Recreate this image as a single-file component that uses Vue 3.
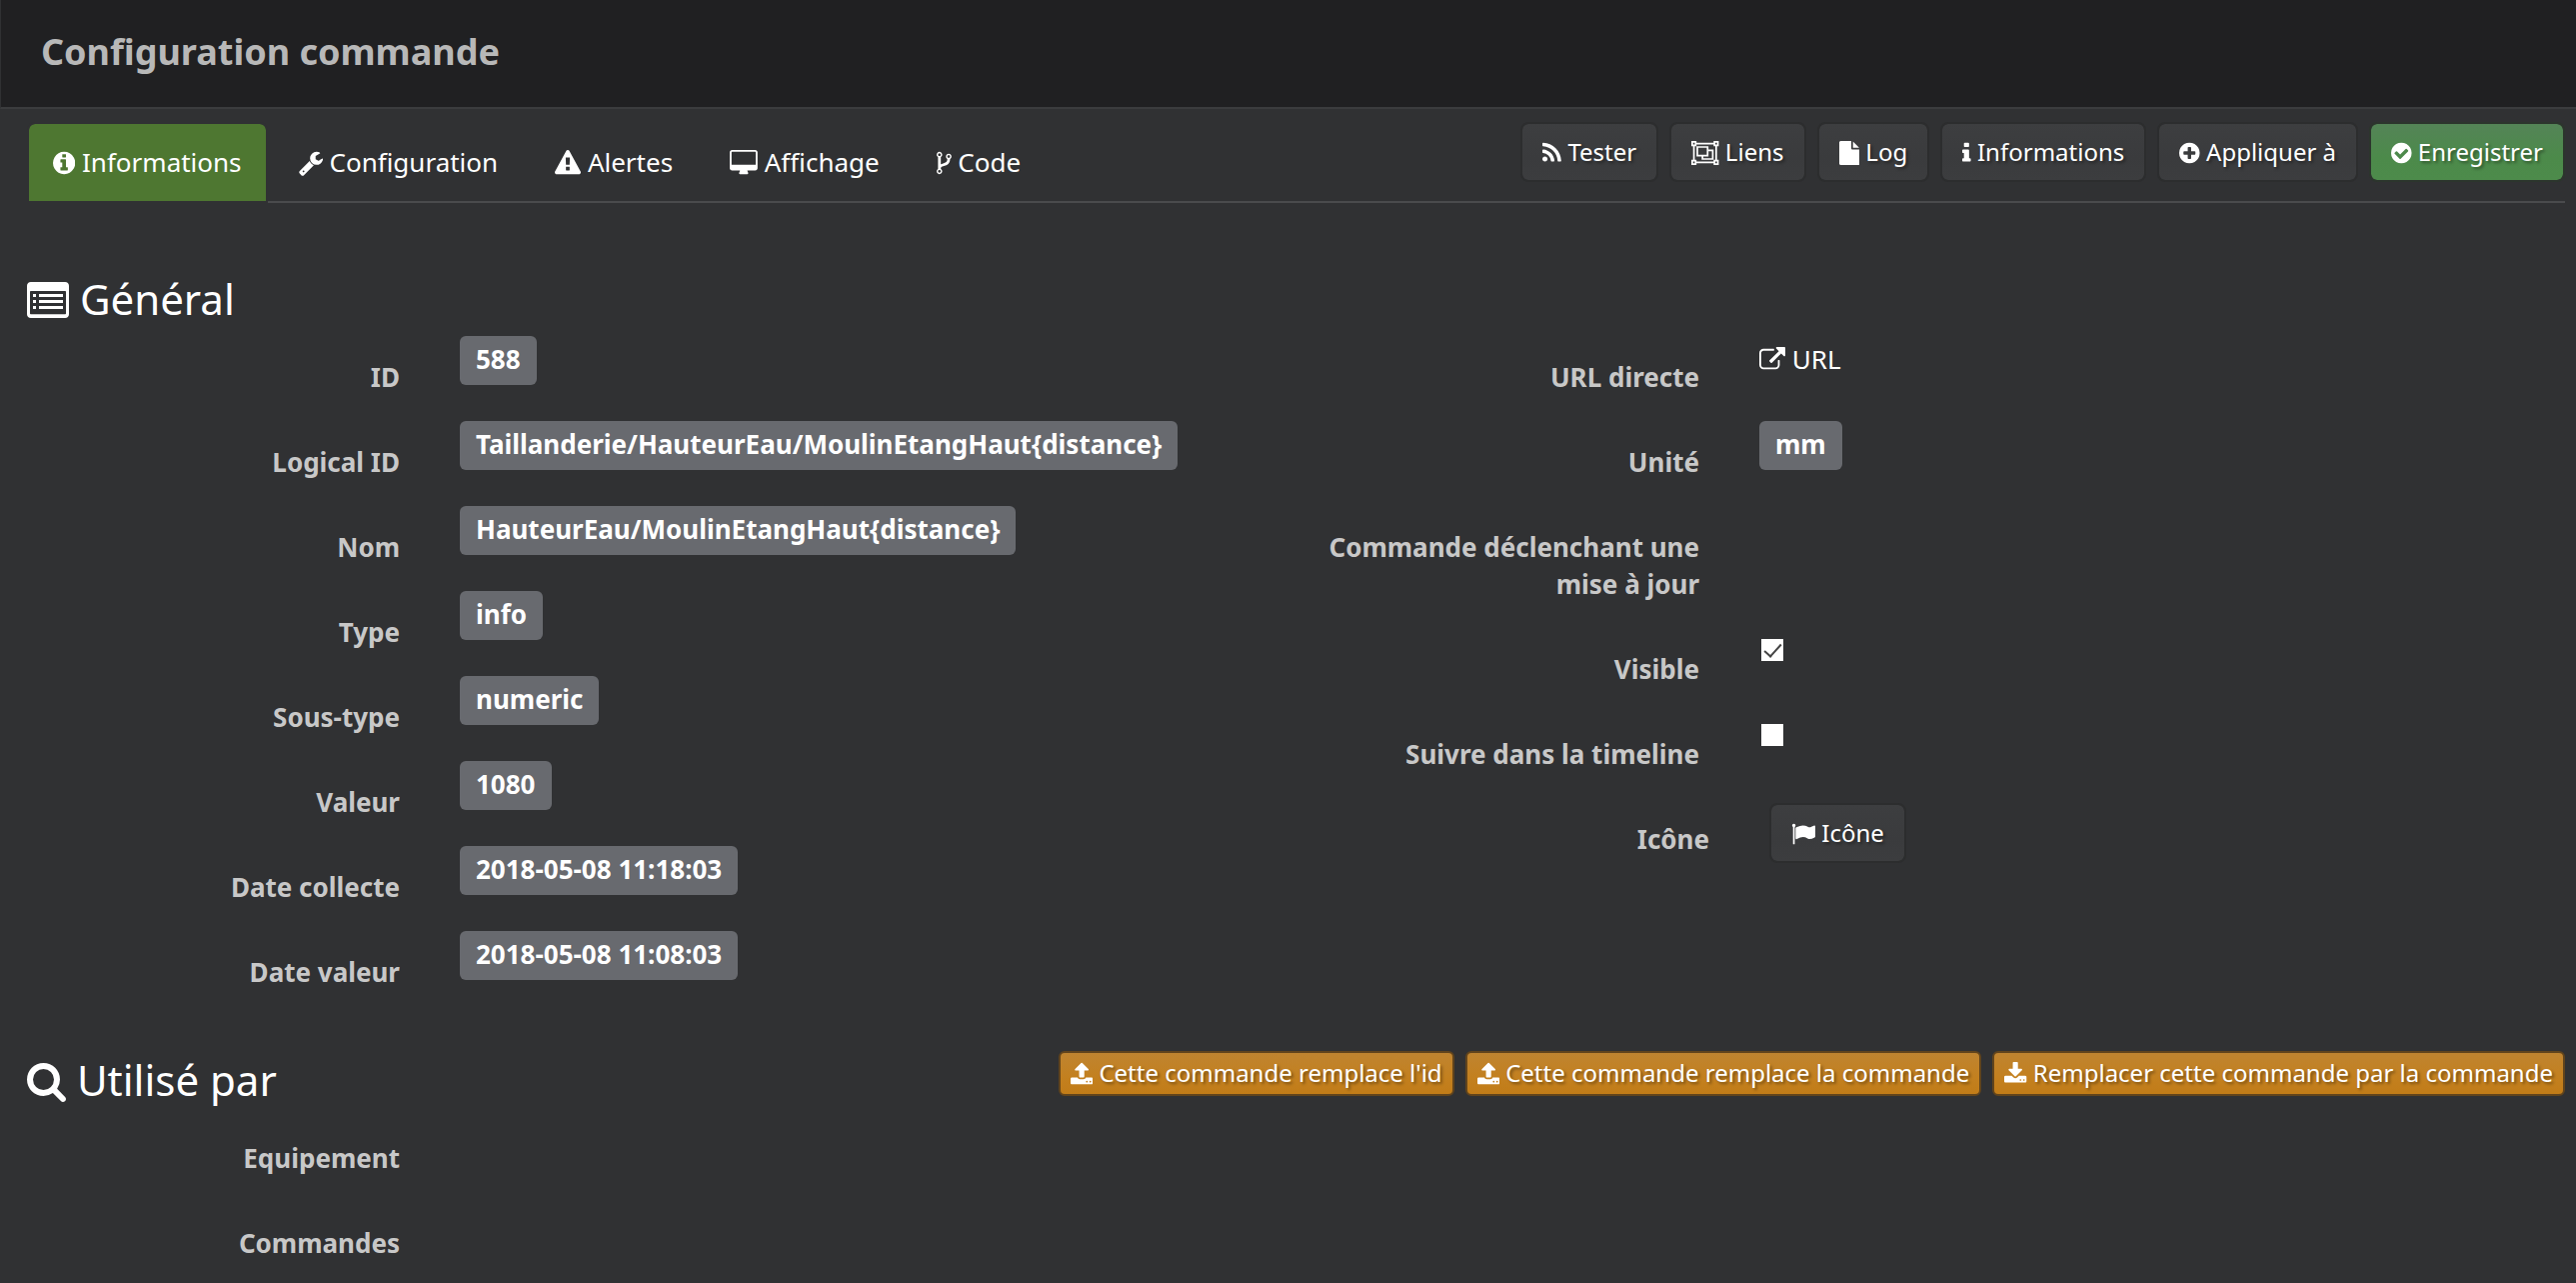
<script setup>
import { h, ref } from 'vue'

const circle = 'q0 209-103 385.5t-279.5 279.5-385.5 103-385.5-103-279.5-279.5-103-385.5 103-385.5 279.5-279.5 385.5-103 385.5 103 279.5 279.5 103 385.5z'

// name: [viewBox x, viewBox width, path]
const icons = {
  infoCircle: [128, 1536, 'M1152 1376v-160q0-14-9-23t-23-9h-96v-512q0-14-9-23t-23-9h-320q-14 0-23 9t-9 23v160q0 14 9 23t23 9h96v320h-96q-14 0-23 9t-9 23v160q0 14 9 23t23 9h448q14 0 23-9t9-23zm-128-896v-160q0-14-9-23t-23-9h-192q-14 0-23 9t-9 23v160q0 14 9 23t23 9h192q14 0 23-9t9-23zm640 416' + circle],
  wrench: [64, 1664, 'M448 1472q0-26-19-45t-45-19-45 19-19 45 19 45 45 19 45-19 19-45zm644-420l-682 682q-37 37-90 37-52 0-91-37l-106-108q-38-36-38-90 0-53 38-91l681-681q39 98 114.5 173.5t173.5 114.5zm634-435q0 39-23 106-47 134-164.5 217.5t-258.5 83.5q-185 0-316.5-131.5t-131.5-316.5 131.5-316.5 316.5-131.5q58 0 121.5 16.5t107.5 46.5q16 11 16 28t-16 28l-293 169v224l193 107q5-3 79-48.5t135.5-81 70.5-35.5q15 0 23.5 10t8.5 25z'],
  warning: [0, 1792, 'M1024 1375v-190q0-14-9.5-23.5t-22.5-9.5h-192q-13 0-22.5 9.5t-9.5 23.5v190q0 14 9.5 23.5t22.5 9.5h192q13 0 22.5-9.5t9.5-23.5zm-2-374l18-459q0-12-10-19-13-11-24-11h-220q-11 0-24 11-10 7-10 21l17 457q0 10 10 16.5t24 6.5h185q14 0 23.5-6.5t10.5-16.5zm-14-934l768 1408q35 63-2 126-17 29-46.5 46t-63.5 17h-1536q-34 0-63.5-17t-46.5-46q-37-63-2-126l768-1408q17-31 47-49t65-18 65 18 47 49z'],
  desktop: [-64, 1920, 'M1728 992v-832q0-13-9.5-22.5t-22.5-9.5h-1600q-13 0-22.5 9.5t-9.5 22.5v832q0 13 9.5 22.5t22.5 9.5h1600q13 0 22.5-9.5t9.5-22.5zm128-832v1088q0 66-47 113t-113 47h-544q0 37 16 77.5t32 71 16 43.5q0 26-19 45t-45 19h-512q-26 0-45-19t-19-45q0-14 16-44t32-70 16-78h-544q-66 0-113-47t-47-113v-1088q0-66 47-113t113-47h1600q66 0 113 47t47 113z'],
  fork: [384, 1024, 'M672 1472q0-40-28-68t-68-28-68 28-28 68 28 68 68 28 68-28 28-68zm0-1152q0-40-28-68t-68-28-68 28-28 68 28 68 68 28 68-28 28-68zm640 128q0-40-28-68t-68-28-68 28-28 68 28 68 68 28 68-28 28-68zm96 0q0 52-26 96.5t-70 69.5q-2 287-226 414-67 38-203 81-128 40-169.5 71t-41.5 100v26q44 25 70 69.5t26 96.5q0 80-56 136t-136 56-136-56-56-136q0-52 26-96.5t70-69.5v-820q-44-25-70-69.5t-26-96.5q0-80 56-136t136-56 136 56 56 136q0 52-26 96.5t-70 69.5v497q54-26 154-57 55-17 87.5-29.5t70.5-31 59-39.5 40.5-51 28-69.5 8.5-91.5q-44-25-70-69.5t-26-96.5q0-80 56-136t136-56 136 56 56 136z'],
  rss: [192, 1408, 'M576 1344q0 80-56 136t-136 56-136-56-56-136 56-136 136-56 136 56 56 136zm512 123q2 28-17 48-18 21-47 21h-135q-25 0-43-16.5t-20-41.5q-22-229-184.5-391.5t-391.5-184.5q-25-2-41.5-20t-16.5-43v-135q0-29 21-47 17-17 43-17h5q160 13 306 80.5t259 181.5q114 113 181.5 259t80.5 306zm512 2q2 27-18 47-18 20-46 20h-143q-26 0-44.5-17.5t-19.5-42.5q-12-215-101-408.5t-231.5-336-336-231.5-408.5-102q-25-1-42.5-19.5t-17.5-43.5v-143q0-28 20-46 18-18 44-18h3q262 13 501.5 120t425.5 294q187 186 294 425.5t120 501.5z'],
  group: [0, 2048, 'M0 0h384v128h1280v-128h384v384h-128v1024h128v384h-384v-128h-1280v128h-384v-384h128v-1024h-128zM128 128v128h128v-128zM1792 128v128h128v-128zM128 1536v128h128v-128zM1792 1536v128h128v-128zM384 256v128h-128v1024h128v128h1280v-128h128v-1024h-128v-128zM384 384h896v256h384v768h-896v-256h-384zM512 512v512h640v-512zM1280 768v384h-384v128h640v-512z'],
  file: [128, 1536, 'M1152 512v-472q22 14 36 28l408 408q14 14 28 36h-472zm-128 32q0 40 28 68t68 28h544v1056q0 40-28 68t-68 28h-1344q-40 0-68-28t-28-68v-1600q0-40 28-68t68-28h800v544z'],
  info: [576, 640, 'M1216 1344v128q0 26-19 45t-45 19h-512q-26 0-45-19t-19-45v-128q0-26 19-45t45-19h64v-384h-64q-26 0-45-19t-19-45v-128q0-26 19-45t45-19h384q26 0 45 19t19 45v576h64q26 0 45 19t19 45zm-128-1152v192q0 26-19 45t-45 19h-256q-26 0-45-19t-19-45v-192q0-26 19-45t45-19h256q26 0 45 19t19 45z'],
  plus: [128, 1536, 'M1344 960v-128q0-26-19-45t-45-19h-256v-256q0-26-19-45t-45-19h-128q-26 0-45 19t-19 45v256h-256q-26 0-45 19t-19 45v128q0 26 19 45t45 19h256v256q0 26 19 45t45 19h128q26 0 45-19t19-45v-256h256q26 0 45-19t19-45zm320-64' + circle],
  check: [128, 1536, 'M1412 734q0-28-18-46l-91-90q-19-19-45-19t-45 19l-408 407-226-226q-19-19-45-19t-45 19l-91 90q-18 18-18 46 0 27 18 45l362 362q19 19 45 19 27 0 46-19l543-543q18-18 18-45zm252 162' + circle],
  list: [0, 1792, 'M160 128h1472q66 0 113 47t47 113v1216q0 66-47 113t-113 47h-1472q-66 0-113-47t-47-113v-1216q0-66 47-113t113-47zM160 512q-32 0-32 32v928q0 32 32 32h1472q32 0 32-32v-928q0-32-32-32zM256 640h128v128h-128zM512 640h1024v128h-1024zM256 896h128v128h-128zM512 896h1024v128h-1024zM256 1152h128v128h-128zM512 1152h1024v128h-1024z'],
  search: [64, 1664, 'M1216 832q0-185-131.5-316.5t-316.5-131.5-316.5 131.5-131.5 316.5 131.5 316.5 316.5 131.5 316.5-131.5 131.5-316.5zm512 832q0 52-38 90t-90 38q-54 0-90-38l-343-342q-179 124-399 124-143 0-273.5-55.5t-225-150-150-225-55.5-273.5 55.5-273.5 150-225 225-150 273.5-55.5 273.5 55.5 225 150 150 225 55.5 273.5q0 220-124 399l343 343q37 37 37 90z'],
  external: [0, 1792, 'M1408 928v320q0 119-84.5 203.5t-203.5 84.5h-832q-119 0-203.5-84.5t-84.5-203.5v-832q0-119 84.5-203.5t203.5-84.5h704q14 0 23 9t9 23v64q0 14-9 23t-23 9h-704q-66 0-113 47t-47 113v832q0 66 47 113t113 47h832q66 0 113-47t47-113v-320q0-14 9-23t23-9h64q14 0 23 9t9 23zm384-864v512q0 26-19 45t-45 19-45-19l-176-176-652 652q-10 10-23 10t-23-10l-114-114q-10-10-10-23t10-23l652-652-176-176q-19-19-19-45t19-45 45-19h512q26 0 45 19t19 45z'],
  upload: [64, 1664, 'M1344 1472q0-26-19-45t-45-19-45 19-19 45 19 45 45 19 45-19 19-45zm256 0q0-26-19-45t-45-19-45 19-19 45 19 45 45 19 45-19 19-45zm128-224v320q0 40-28 68t-68 28h-1472q-40 0-68-28t-28-68v-320q0-40 28-68t68-28h427q21 56 70.5 92t110.5 36h256q61 0 110.5-36t70.5-92h427q40 0 68 28t28 68zm-325-648q-17 40-59 40h-256v448q0 26-19 45t-45 19h-256q-26 0-45-19t-19-45v-448h-256q-42 0-59-40-17-39 14-69l448-448q18-19 45-19t45 19l448 448q31 30 14 69z'],
  download: [64, 1664, 'M1344 1344q0-26-19-45t-45-19-45 19-19 45 19 45 45 19 45-19 19-45zm256 0q0-26-19-45t-45-19-45 19-19 45 19 45 45 19 45-19 19-45zm128-224v320q0 40-28 68t-68 28h-1472q-40 0-68-28t-28-68v-320q0-40 28-68t68-28h465l135 136q58 56 136 56t136-56l136-136h464q40 0 68 28t28 68zm-325-569q17 41-14 70l-448 448q-18 19-45 19t-45-19l-448-448q-31-29-14-70 17-39 59-39h256v-448q0-26 19-45t45-19h256q26 0 45 19t19 45v448h256q42 0 59 39z'],
  flag: [0, 1792, 'M320 256q0 72-64 110v1266q0 13-9.5 22.5t-22.5 9.5h-64q-13 0-22.5-9.5t-9.5-22.5v-1266q-64-38-64-110 0-53 37.5-90.5t90.5-37.5 90.5 37.5 37.5 90.5zm1472 64v763q0 25-12.5 38.5t-39.5 27.5q-215 116-369 116-61 0-123.5-22t-108.5-48-115.5-48-142.5-22q-192 0-464 146-17 9-33 9-26 0-45-19t-19-45v-742q0-32 31-55 21-14 79-43 236-120 421-120 107 0 200 29t219 88q38 19 88 19 54 0 117.5-21t110-47 88-47 54.5-21q26 0 45 19t19 45z'],
}

const Icon = (props) => {
  const [x, w, d] = icons[props.name]
  return h('svg', { class: 'icon', viewBox: `${x} 0 ${w} 1792`, 'aria-hidden': 'true' }, [
    h('path', { d, 'fill-rule': 'evenodd' }),
  ])
}
Icon.props = ['name']

const tabs = [
  { icon: 'infoCircle', text: 'Informations' },
  { icon: 'wrench', text: 'Configuration' },
  { icon: 'warning', text: 'Alertes' },
  { icon: 'desktop', text: 'Affichage' },
  { icon: 'fork', text: 'Code' },
]
const activeTab = ref(0)

const actions = [
  { icon: 'rss', text: 'Tester' },
  { icon: 'group', text: 'Liens' },
  { icon: 'file', text: 'Log' },
  { icon: 'info', text: 'Informations' },
  { icon: 'plus', text: 'Appliquer à' },
  { icon: 'check', text: 'Enregistrer', success: true },
]

const fields = [
  ['ID', '588'],
  ['Logical ID', 'Taillanderie/HauteurEau/MoulinEtangHaut{distance}'],
  ['Nom', 'HauteurEau/MoulinEtangHaut{distance}'],
  ['Type', 'info'],
  ['Sous-type', 'numeric'],
  ['Valeur', '1080'],
  ['Date collecte', '2018-05-08 11:18:03'],
  ['Date valeur', '2018-05-08 11:08:03'],
]

const replacements = [
  { icon: 'upload', text: "Cette commande remplace l'id" },
  { icon: 'upload', text: 'Cette commande remplace la commande' },
  { icon: 'download', text: 'Remplacer cette commande par la commande' },
]

const visible = ref(true)
const timeline = ref(false)
</script>

<template>
  <div class="dialog">
    <header class="titlebar">
      <h1>Configuration commande</h1>
    </header>

    <main>
      <div class="toolbar">
        <nav class="tabs">
          <a
            v-for="(tab, i) in tabs"
            :key="tab.text"
            href="#"
            :class="{ active: i === activeTab }"
            @click.prevent="activeTab = i"
          ><Icon :name="tab.icon" /> {{ tab.text }}</a>
        </nav>
        <div class="buttons">
          <button
            v-for="action in actions"
            :key="action.text"
            type="button"
            class="btn"
            :class="{ success: action.success }"
          ><Icon :name="action.icon" /> {{ action.text }}</button>
        </div>
      </div>

      <section>
        <h2><Icon name="list" /> Général</h2>
        <div class="columns">
          <dl class="rows">
            <div v-for="[label, value] in fields" :key="label" class="row">
              <dt class="label">{{ label }}</dt>
              <dd><span class="badge">{{ value }}</span></dd>
            </div>
          </dl>
          <div class="rows right">
            <div class="row">
              <span class="label">URL directe</span>
              <div><a class="url" href="#"><Icon name="external" /> URL</a></div>
            </div>
            <div class="row">
              <span class="label">Unité</span>
              <div><span class="badge">mm</span></div>
            </div>
            <div class="row">
              <span class="label">Commande déclenchant une mise à jour</span>
            </div>
            <div class="row">
              <label class="label" for="visible">Visible</label>
              <div><input id="visible" v-model="visible" type="checkbox" /></div>
            </div>
            <div class="row">
              <label class="label" for="timeline">Suivre dans la timeline</label>
              <div><input id="timeline" v-model="timeline" type="checkbox" /></div>
            </div>
            <div class="row nested">
              <label class="label" for="icon-picker">Icône</label>
              <div><button id="icon-picker" type="button" class="btn"><Icon name="flag" /> Icône</button></div>
            </div>
          </div>
        </div>
      </section>

      <section class="usage">
        <div class="heading">
          <h2><Icon name="search" /> Utilisé par</h2>
          <div class="buttons">
            <button
              v-for="item in replacements"
              :key="item.text"
              type="button"
              class="btn warning"
            ><Icon :name="item.icon" /> {{ item.text }}</button>
          </div>
        </div>
        <div class="columns">
          <div class="rows">
            <div class="row"><span class="label">Equipement</span></div>
            <div class="row"><span class="label">Commandes</span></div>
          </div>
        </div>
      </section>
    </main>
  </div>
</template>

<style>
body {
  margin: 0;
  background: #303133;
}
</style>

<style scoped>
.dialog {
  min-height: 100vh;
  box-sizing: border-box;
  background: #303133;
  color: #fff;
  font: 26px/37px "Noto Sans", "Open Sans", sans-serif;
}

.titlebar {
  padding: 27px 40px 30px;
  border-left: 1px solid #303133;
  border-bottom: 2px solid #3b3c3e;
  background: #202022;
}

h1 {
  margin: 0;
  color: #b8b8b8;
  font-size: 36px;
  line-height: 50px;
}

main {
  padding: 13px 11px 10px 27px;
}

.icon {
  height: 26px;
  vertical-align: -4px;
  fill: currentColor;
}

.toolbar {
  display: flex;
  justify-content: space-between;
  align-items: flex-start;
  border-bottom: 2px solid #4a4b4d;
}

.tabs {
  display: flex;
  gap: 5px;
  margin-bottom: -2px;
}

.tabs a {
  padding: 20px 24px;
  border: 2px solid transparent;
  border-radius: 8px 8px 0 0;
  color: #fff;
  text-decoration: none;
}

.tabs a.active {
  border-color: #303133;
  background: #4e7731;
  background-clip: padding-box;
}

.buttons {
  display: flex;
  gap: 11px;
}

.btn {
  padding: 11px 20px;
  border: 2px solid #2c2d2e;
  border-radius: 8px;
  background: linear-gradient(#3d3e40, #3a3b3d 60%, #3c3d3f);
  background-clip: padding-box;
  color: #fff;
  font: 24px/34px "Noto Sans", "Open Sans", sans-serif;
  text-shadow: 2px 2px 3px rgba(0, 0, 0, 0.4);
}

.btn .icon {
  height: 24px;
}

.btn.success {
  border-color: #2c352d;
  background-image: linear-gradient(#548457, #4c8a4a 60%, #4d8b4b);
}

.btn.warning {
  padding: 3px 10px 4px;
  border-color: #61441c;
  border-radius: 6px;
  background: linear-gradient(#bf8430, #c3801f 60%, #c17c18);
}

h2 {
  margin: 0;
  font-size: 42px;
  font-weight: 400;
  line-height: 46px;
}

h2 .icon {
  height: 42px;
  vertical-align: -6px;
}

section {
  padding-top: 73px;
}

.columns {
  display: grid;
  grid-template-columns: 1213fr 1266fr;
  column-gap: 60px;
  padding-top: 14px;
}

.rows {
  display: flex;
  flex-direction: column;
  gap: 25px;
  margin: 0;
}

.row {
  display: grid;
  grid-template-columns: 373fr 780fr;
  column-gap: 60px;
  align-items: start;
}

.right .row {
  grid-template-columns: 400fr 806fr;
}

.row.nested {
  margin: 0 -10px 0 10px;
}

.row > div,
dd {
  display: flex;
  margin: 0;
}

.label {
  padding-top: 23px;
  color: #c8c8c8;
  font-weight: 700;
  text-align: right;
}

.badge {
  padding: 5px 16px 7px;
  border-radius: 6px;
  background: #686a6f;
  font-weight: 700;
}

.url {
  padding-top: 5px;
  color: #fff;
  text-decoration: none;
}

input[type="checkbox"] {
  display: grid;
  place-items: center;
  width: 22px;
  height: 22px;
  margin: 11px 2px 0;
  appearance: none;
  background: #fff;
}

input[type="checkbox"]:checked::before {
  content: "";
  width: 15px;
  height: 7px;
  margin-bottom: 4px;
  border: solid #444;
  border-width: 0 0 2px 2px;
  transform: rotate(-48deg);
}

.nested .btn {
  margin-top: 5px;
}

.usage {
  padding-top: 60px;
}

.heading {
  display: flex;
  justify-content: space-between;
  align-items: flex-start;
}

.heading h2 {
  padding-top: 6px;
}
</style>
